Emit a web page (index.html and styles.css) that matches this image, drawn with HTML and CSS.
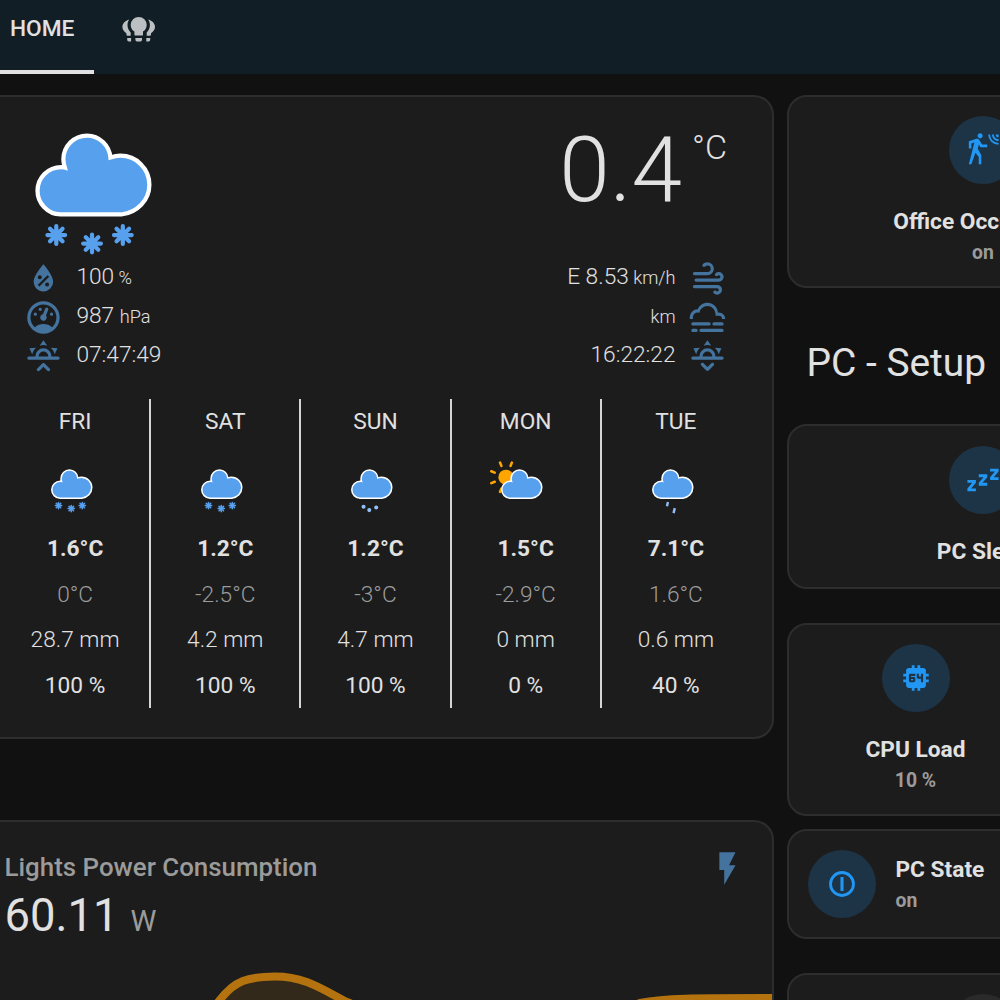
FILE: index.html
```html
<!DOCTYPE html>
<html lang="en">
<head>
<meta charset="utf-8">
<title>Home</title>
<link rel="stylesheet" href="styles.css">
</head>
<body>
<svg class="defs" width="0" height="0">
  <defs>
    <path id="cloud" d="M47.7,35.4c0-4.6-3.7-8.2-8.2-8.2c-1,0-1.9,0.2-2.8,0.5c-0.3-3.4-3.1-6.2-6.6-6.2c-3.7,0-6.7,3-6.7,6.7c0,0.8,0.2,1.6,0.4,2.3c-0.3-0.1-0.7-0.1-1-0.1c-3.7,0-6.7,3-6.7,6.7c0,3.6,2.9,6.6,6.5,6.7l17.2,0C44.2,43.3,47.7,39.8,47.7,35.4z" fill="#57a0ee" stroke="#fff" stroke-width="1.2"/>
    <path id="flake" d="M0,-2.5V2.5M-2.5,0H2.5M-1.77,-1.77L1.77,1.77M1.77,-1.77L-1.77,1.77" fill="none" stroke="#57a0ee" stroke-width="1.2" stroke-linecap="round"/>
    <g id="snowy">
      <use href="#cloud"/>
      <use href="#flake" x="21.4" y="49.6"/>
      <use href="#flake" x="31.5" y="52"/>
      <use href="#flake" x="40.2" y="49.6"/>
    </g>
    <path id="horizon" d="M3,12H7A5,5 0 0,1 12,7A5,5 0 0,1 17,12H21A1,1 0 0,1 22,13A1,1 0 0,1 21,14H3A1,1 0 0,1 2,13A1,1 0 0,1 3,12M15,12A3,3 0 0,0 12,9A3,3 0 0,0 9,12H15M12,2L14.39,5.42C13.65,5.15 12.84,5 12,5C11.16,5 10.35,5.15 9.61,5.42L12,2M3.34,7L7.5,6.65C6.9,7.16 6.36,7.78 5.94,8.5C5.5,9.24 5.25,10 5.11,10.79L3.34,7M20.65,7L18.88,10.79C18.74,10 18.47,9.23 18.05,8.5C17.63,7.78 17.1,7.15 16.5,6.64L20.65,7"/>
  </defs>
</svg>

<header class="tabs">
  <div class="tab tab-active">HOME</div>
  <div class="tab tab-icon">
    <svg width="34" height="26" viewBox="122 16 34 26">
      <path d="M138.7,17a8,8 0 0 1 8,8c0,3-1.6,5.2-3.7,6.6v2.8q0,1.2-1.2,1.2h-6.2q-1.2,0-1.2-1.2v-2.8c-2.1-1.4-3.7-3.6-3.7-6.6a8,8 0 0 1 8-8zM135.4,38h6.6v1.8q0,1.6-1.6,1.6h-3.4q-1.6,0-1.6-1.6zM129.2,19.6c-4,1.1-6.800,4-6.800,7.5c0,2.8,1.8,4.7,4,6.2v1.2q0,1.2,1.2,1.2h3.1v-3.2c-2.2-2.2-3.2-4.5-3.2-7.4c0-2,.6-3.9,1.7-5.5zM127.2,38h3.9v3.4h-2.3q-1.6,0-1.6-1.6zM148.2,19.6c4,1.1,6.8,4,6.8,7.5c0,2.8-1.8,4.7-4,6.2v1.2q0,1.2-1.2,1.2h-3.1v-3.2c2.2-2.2,3.2-4.5,3.2-7.4c0-2-.6-3.9-1.7-5.5zM150.2,38h-3.9v3.4h2.3q1.6,0,1.6-1.6z"/>
    </svg>
  </div>
</header>

<main class="board">
  <div class="col-left">
    <section class="card weather">
      <div class="current">
        <svg class="current-icon" width="141.6" height="148.7" viewBox="12 14 40 42"><use href="#snowy"/></svg>
        <div class="temperature">0.4<span class="degree">°C</span></div>
      </div>
      <div class="attributes">
        <ul class="attr-list">
          <li><svg class="mdi" viewBox="0 0 24 24"><path d="M12,3.25C12,3.25 6,10 6,14C6,17.32 8.69,20 12,20A6,6 0 0,0 18,14C18,10 12,3.25 12,3.25M14.47,9.97L15.53,11.03L9.53,17.03L8.47,15.97M9.75,10A1.25,1.25 0 0,1 11,11.25A1.25,1.25 0 0,1 9.75,12.5A1.25,1.25 0 0,1 8.5,11.25A1.25,1.25 0 0,1 9.75,10M14.25,14.5A1.25,1.25 0 0,1 15.5,15.75A1.25,1.25 0 0,1 14.25,17A1.25,1.25 0 0,1 13,15.75A1.25,1.25 0 0,1 14.25,14.5Z"/></svg><span class="value">100<small> %</small></span></li>
          <li><svg class="mdi" viewBox="0 0 24 24"><path d="M12,2A10,10 0 0,0 2,12A10,10 0 0,0 12,22A10,10 0 0,0 22,12A10,10 0 0,0 12,2M12,4A8,8 0 0,1 20,12C20,14.4 19,16.5 17.3,18C15.9,16.7 14,16 12,16C10,16 8.2,16.7 6.7,18C5,16.5 4,14.4 4,12A8,8 0 0,1 12,4M14,5.89C13.62,5.9 13.26,6.15 13.1,6.54L11.81,9.77L11.71,10C11,10.13 10.41,10.6 10.14,11.26C9.73,12.29 10.23,13.45 11.26,13.86C12.29,14.27 13.45,13.77 13.86,12.74C14.12,12.08 14,11.32 13.57,10.76L13.67,10.5L14.96,7.29L14.97,7.26C15.17,6.75 14.92,6.17 14.41,5.96C14.28,5.91 14.15,5.89 14,5.89M10,6A1,1 0 0,0 9,7A1,1 0 0,0 10,8A1,1 0 0,0 11,7A1,1 0 0,0 10,6M7,9A1,1 0 0,0 6,10A1,1 0 0,0 7,11A1,1 0 0,0 8,10A1,1 0 0,0 7,9M17,9A1,1 0 0,0 16,10A1,1 0 0,0 17,11A1,1 0 0,0 18,10A1,1 0 0,0 17,9Z"/></svg><span class="value">987 <small>hPa</small></span></li>
          <li><svg class="mdi" viewBox="0 0 24 24"><use href="#horizon"/><path d="M12.71,16.3L15.82,19.41C16.21,19.8 16.21,20.43 15.82,20.82C15.43,21.21 14.8,21.21 14.41,20.82L12,18.41L9.59,20.82C9.2,21.21 8.57,21.21 8.18,20.82C7.79,20.43 7.79,19.8 8.18,19.41L11.29,16.3C11.5,16.1 11.74,16 12,16C12.26,16 12.5,16.1 12.71,16.3Z"/></svg><span class="value">07:47:49</span></li>
        </ul>
        <ul class="attr-list attr-right">
          <li><span class="value">E 8.53<small> km/h</small></span><svg class="mdi" viewBox="0 0 24 24"><path d="M4,10A1,1 0 0,1 3,9A1,1 0 0,1 4,8H12A2,2 0 0,0 14,6A2,2 0 0,0 12,4C11.45,4 10.95,4.22 10.59,4.59C10.2,5 9.56,5 9.17,4.59C8.78,4.2 8.78,3.56 9.17,3.17C9.9,2.45 10.9,2 12,2A4,4 0 0,1 16,6A4,4 0 0,1 12,10H4M19,12A1,1 0 0,0 20,11A1,1 0 0,0 19,10C18.72,10 18.47,10.11 18.29,10.29C17.9,10.68 17.27,10.68 16.88,10.29C16.5,9.9 16.5,9.27 16.88,8.88C17.42,8.34 18.17,8 19,8A3,3 0 0,1 22,11A3,3 0 0,1 19,14H5A1,1 0 0,1 4,13A1,1 0 0,1 5,12H19M18,18H4A1,1 0 0,1 3,17A1,1 0 0,1 4,16H18A3,3 0 0,1 21,19A3,3 0 0,1 18,22C17.17,22 16.42,21.66 15.88,21.12C15.5,20.73 15.5,20.1 15.88,19.71C16.27,19.32 16.9,19.32 17.29,19.71C17.47,19.89 17.72,20 18,20A1,1 0 0,0 19,19A1,1 0 0,0 18,18Z"/></svg></li>
          <li><span class="value"><small>km</small></span><svg class="mdi" viewBox="0 0 24 24"><path d="M3,15H13A1,1 0 0,1 14,16A1,1 0 0,1 13,17H3A1,1 0 0,1 2,16A1,1 0 0,1 3,15M16,15H21A1,1 0 0,1 22,16A1,1 0 0,1 21,17H16A1,1 0 0,1 15,16A1,1 0 0,1 16,15M1,12A5,5 0 0,1 6,7C7,4.65 9.3,3 12,3C15.43,3 18.24,5.66 18.5,9.03L19,9C21.19,9 22.97,10.76 23,13H21A2,2 0 0,0 19,11H17V10A5,5 0 0,0 12,5C9.5,5 7.45,6.82 7.06,9.19C6.73,9.07 6.37,9 6,9A3,3 0 0,0 3,12C3,12.35 3.06,12.69 3.17,13H1.1L1,12M3,19H5A1,1 0 0,1 6,20A1,1 0 0,1 5,21H3A1,1 0 0,1 2,20A1,1 0 0,1 3,19M8,19H21A1,1 0 0,1 22,20A1,1 0 0,1 21,21H8A1,1 0 0,1 7,20A1,1 0 0,1 8,19Z"/></svg></li>
          <li><span class="value">16:22:22</span><svg class="mdi" viewBox="0 0 24 24"><use href="#horizon"/><path d="M12.71,20.71L15.82,17.6C16.21,17.21 16.21,16.57 15.82,16.18C15.43,15.79 14.8,15.79 14.41,16.18L12,18.59L9.59,16.18C9.2,15.79 8.57,15.79 8.18,16.18C7.79,16.57 7.79,17.21 8.18,17.6L11.29,20.71C11.5,20.9 11.74,21 12,21C12.26,21 12.5,20.9 12.71,20.71Z"/></svg></li>
        </ul>
      </div>
      <div class="forecast">
        <div class="day">
          <div class="name">FRI</div>
          <svg class="day-icon" viewBox="6 12 44 46"><use href="#snowy"/></svg>
          <div class="high">1.6°C</div><div class="low">0°C</div><div class="rain">28.7 mm</div><div class="chance">100 %</div>
        </div>
        <div class="day">
          <div class="name">SAT</div>
          <svg class="day-icon" viewBox="6 12 44 46"><use href="#snowy"/></svg>
          <div class="high">1.2°C</div><div class="low">-2.5°C</div><div class="rain">4.2 mm</div><div class="chance">100 %</div>
        </div>
        <div class="day">
          <div class="name">SUN</div>
          <svg class="day-icon" viewBox="6 12 44 46"><use href="#cloud"/><g fill="#91c0f8"><circle cx="25.4" cy="50.6" r="1.6"/><circle cx="29.9" cy="53.2" r="1.6"/><circle cx="35.4" cy="51.1" r="1.6"/></g></svg>
          <div class="high">1.2°C</div><div class="low">-3°C</div><div class="rain">4.7 mm</div><div class="chance">100 %</div>
        </div>
        <div class="day">
          <div class="name">MON</div>
          <svg class="day-icon" viewBox="6 12 44 46">
            <g transform="translate(19.4 27.2)">
              <circle r="6" fill="orange"/>
              <path d="M-3.6,-8.900L-4.700,-11.600M3.600,-8.900L4.700,-11.600M-8.900,-3.600L-11.600,-4.700M-8.900,3.600L-11.600,4.700M-3.600,8.900L-4.700,11.600" stroke="orange" stroke-width="2" stroke-linecap="round"/>
            </g>
            <use href="#cloud"/>
          </svg>
          <div class="high">1.5°C</div><div class="low">-2.9°C</div><div class="rain">0 mm</div><div class="chance">0 %</div>
        </div>
        <div class="day">
          <div class="name">TUE</div>
          <svg class="day-icon" viewBox="6 12 44 46"><use href="#cloud"/><path d="M28.1,46.800L27.300,50.100M33.500,51.600L32.500,55.600" stroke="#91c0f8" stroke-width="1.9"/></svg>
          <div class="high">7.1°C</div><div class="low">1.6°C</div><div class="rain">0.6 mm</div><div class="chance">40 %</div>
        </div>
      </div>
    </section>

    <section class="card power">
      <div class="power-head">
        <h2>Lights Power Consumption</h2>
        <svg class="mdi" viewBox="0 0 24 24"><path d="M7,2V13H10V22L17,10H13L17,2H7Z"/></svg>
      </div>
      <div class="reading">60.11<span class="unit">W</span></div>
      <svg class="graph" width="790" height="160" viewBox="-18 960 790 160">
        <path d="M190,1100C205,1040 205,1018 219,1001C235,980 248,977 275,976.5C306,976.5 323,990 347,1002C440,1040 560,1040 640,1003C665,998 690,998 772,998V1120H190Z" fill="#33291a"/>
        <path d="M190,1100C205,1040 205,1018 219,1001C235,980 248,977 275,976.5C306,976.5 323,990 347,1002C440,1040 560,1040 640,1003C665,998 690,998 780,998" fill="none" stroke="#b4730e" stroke-width="8"/>
      </svg>
    </section>
  </div>

  <div class="col-right">
    <section class="card tile tile-tall">
      <div class="badge"><svg viewBox="0 0 24 24"><path d="M10,0.2C9,0.2 8.2,1 8.2,2C8.2,3 9,3.8 10,3.8C11,3.8 11.8,3 11.8,2C11.8,1 11,0.2 10,0.2M15.67,1A7.33,7.33 0 0,0 23,8.33V7A6,6 0 0,1 17,1H15.67M18.33,1C18.33,3.58 20.42,5.67 23,5.67V4.33C21.16,4.33 19.67,2.84 19.67,1H18.33M21,1A2,2 0 0,0 23,3V1H21M7.92,4.03C7.75,4.03 7.58,4.06 7.42,4.11L2,5.8V11H3.8V7.33L5.91,6.67L2,22H3.8L6.67,13.89L9,17V22H10.8V15.59L8.31,11.05L9.04,8.18L10.12,10H15V8.2H11.38L9.38,4.87C9.08,4.37 8.54,4.03 7.92,4.03Z"/></svg></div>
      <div class="primary">Office Occupancy</div>
      <div class="secondary">on</div>
    </section>
    <h1 class="title">PC - Setup</h1>
    <section class="card tile tile-short">
      <div class="badge"><svg viewBox="0 0 24 24"><path d="M23,12H17V10L20.39,6H17V4H23V6L19.62,10H23V12M15,16H9V14L12.39,10H9V8H15V10L11.62,14H15V16M7,20H1V18L4.39,14H1V12H7V14L3.62,18H7V20Z"/></svg></div>
      <div class="primary">PC Sleep</div>
    </section>
    <section class="card tile tile-tall tile-cpu">
      <div class="badge"><svg viewBox="0 0 24 24"><path fill-rule="evenodd" d="M9,3V5H7A2,2 0 0,0 5,7V9H3V11H5V13H3V15H5V17A2,2 0 0,0 7,19H9V21H11V19H13V21H15V19H17A2,2 0 0,0 19,17V15H21V13H19V11H21V9H19V7A2,2 0 0,0 17,5H15V3H13V5H11V3M8,9H11.5V10.5H8.5V11.25H10.5A1,1 0 0,1 11.5,12.25V14A1,1 0 0,1 10.5,15H8A1,1 0 0,1 7,14V10A1,1 0 0,1 8,9M12.5,9H14V11H15.5V9H17V15H15.5V12.5H13.5A1,1 0 0,1 12.5,11.5M8.5,12.75V13.5H10V12.75"/></svg></div>
      <div class="primary">CPU Load</div>
      <div class="secondary">10 %</div>
    </section>
    <section class="card state">
      <div class="badge"><svg viewBox="0 0 24 24"><circle cx="12" cy="12" r="8.1" fill="none" stroke="#2196f3" stroke-width="2"/><path d="M10.9,7H13.1V17H10.9Z"/></svg></div>
      <div class="state-info">
        <div class="primary">PC State</div>
        <div class="secondary">on</div>
      </div>
    </section>
    <section class="card tile tile-tall tile-last">
      <div class="badge badge-off"></div>
    </section>
  </div>
</main>
</body>
</html>
```
FILE: styles.css
```css
* { box-sizing: border-box; }
html, body { height: 100%; overflow: hidden; }
body {
  margin: 0;
  background: #111;
  color: #e1e1e1;
  font-family: Roboto, sans-serif;
  font-size: 22.7px;
}
h1, h2, ul { margin: 0; padding: 0; font-weight: 400; }
svg { display: block; flex: none; }
.defs { display: none; }

.tabs {
  display: flex;
  height: 74px;
  background: #111e25;
}
.tab { height: 74px; }
.tab-active {
  width: 94px;
  padding-left: 10px;
  border-bottom: 4px solid #e1e1e1;
  font-weight: 500;
  line-height: 57px;
}
.tab-icon { padding: 16px 28px; fill: #bcc0c2; }

.board {
  display: grid;
  grid-template-columns: 794px 392px;
  column-gap: 13px;
  width: 1199px;
  margin: 21px 0 0 -20px;
}
.card {
  background: #1c1c1c;
  border: 2px solid #2d2d2d;
  border-radius: 20px;
  overflow: hidden;
}
.mdi { width: 38.9px; height: 38.9px; fill: #44739e; }

.weather { height: 644px; padding-left: 18px; }
.current {
  display: flex;
  justify-content: space-between;
  height: 162px;
  padding: 11.5px 45px 0 23px;
}
.temperature {
  display: flex;
  font-size: 91px;
  font-weight: 300;
  line-height: 123px;
}
.degree { margin-left: 10px; font-size: 34px; line-height: 77px; }

.attributes {
  display: flex;
  justify-content: space-between;
  height: 140px;
  padding: 0 45.6px 0 23.5px;
}
.attr-list { list-style: none; }
.attr-list li { display: flex; gap: 14px; height: 38.9px; }
.attr-right li { gap: 12px; justify-content: flex-end; }
.value { font-weight: 300; line-height: 36.5px; white-space: pre; }
.value small { font-size: 18.2px; }

.forecast {
  display: grid;
  grid-template-columns: repeat(5, 150.2px);
  height: 308px;
  margin-left: 1px;
}
.day {
  display: flex;
  flex-direction: column;
  align-items: center;
  line-height: 45.5px;
  border-right: 2px solid #d5d5d5;
}
.day:last-child { border-right-color: transparent; }
.day-icon {
  width: 55.7px;
  height: 58.2px;
  margin: 13px 17px 10.5px 0;
}
.high { font-weight: 700; }
.low { color: #9b9b9b; font-weight: 300; }
.rain { font-weight: 300; }

.power { height: 300px; margin-top: 81px; padding-left: 18px; }
.power-head {
  display: flex;
  justify-content: space-between;
  height: 66px;
  padding: 27px 25px 0 4.5px;
}
.power-head h2 {
  color: #9b9b9b;
  font-size: 25.9px;
  font-weight: 500;
  line-height: 36px;
}
.reading { padding: 1px 0 0 4.5px; font-size: 45.4px; line-height: 54px; }
.unit { margin-left: 12px; color: #9b9b9b; font-size: 29.2px; }
.graph { margin: 12px 0 0 -18px; }

.tile {
  display: flex;
  flex-direction: column;
  align-items: center;
  padding-top: 19px;
}
.tile-tall { height: 193px; }
.tile-short { height: 165px; padding-top: 20px; }
.tile-cpu { width: 257px; margin-top: 34px; }
.tile-last { margin-top: 34px; }
.badge {
  display: flex;
  flex: none;
  align-items: center;
  justify-content: center;
  width: 68px;
  height: 68px;
  border-radius: 50%;
  background: #1d3447;
}
.badge-off { background: #2a2a2a; }
.badge svg { width: 34px; height: 34px; fill: #2196f3; }
.primary { font-weight: 700; line-height: 32px; white-space: nowrap; }
.tile .primary { margin-top: 22px; }
.secondary { color: #9b9b9b; font-size: 19.4px; font-weight: 700; line-height: 30px; }
.title { height: 136px; padding-left: 19.5px; font-size: 38.9px; line-height: 150px; }
.state {
  display: flex;
  align-items: center;
  height: 110px;
  margin-top: 13px;
  padding-left: 19px;
}
.state-info { margin-left: 19.5px; padding-top: 2px; }
```
